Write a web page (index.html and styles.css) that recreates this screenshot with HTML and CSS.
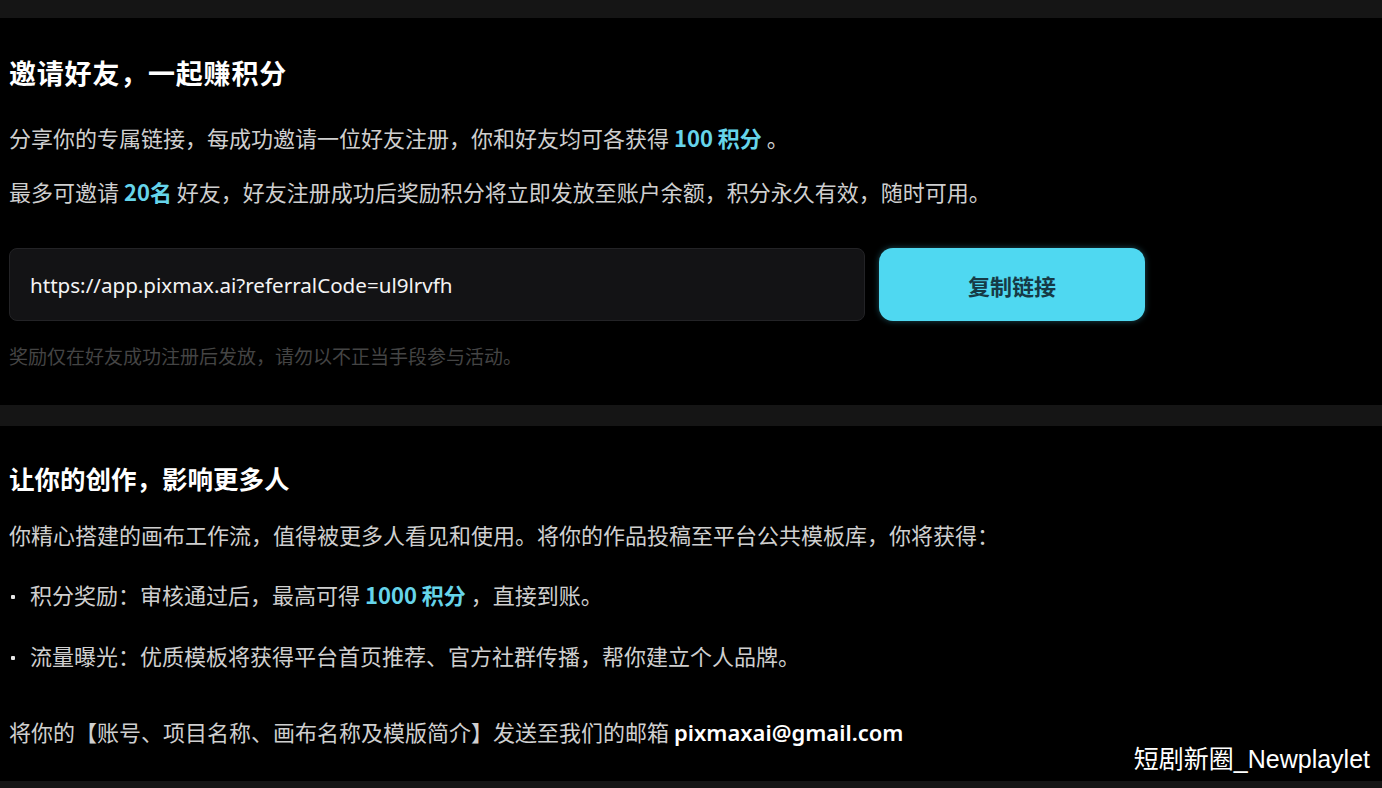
FILE: index.html
```html
<!DOCTYPE html>
<html lang="zh-CN">
<head>
    <meta charset="UTF-8">
    <meta name="viewport" content="width=device-width, initial-scale=1.0">
    <title>邀请好友</title>
    <link rel="stylesheet" href="styles.css">
</head>
<body>

    <div class="band band-top"></div>

    <!-- 邀请好友 -->
    <section class="panel invite">
        <h2>邀请好友，一起赚积分</h2>
        <p class="desc">分享你的专属链接，每成功邀请一位好友注册，你和好友均可各获得 <span class="hl">100 积分</span> 。</p>
        <p class="desc second">最多可邀请 <span class="hl">20名</span> 好友，好友注册成功后奖励积分将立即发放至账户余额，积分永久有效，随时可用。</p>
        <div class="link-row">
            <div class="link-box">https://app.pixmax.ai?referralCode=ul9lrvfh</div>
            <button class="copy-btn">复制链接</button>
        </div>
        <p class="hint">奖励仅在好友成功注册后发放，请勿以不正当手段参与活动。</p>
    </section>

    <div class="band band-mid"></div>

    <!-- 模板投稿 -->
    <section class="panel submit">
        <h2>让你的创作，影响更多人</h2>
        <p class="desc">你精心搭建的画布工作流，值得被更多人看见和使用。将你的作品投稿至平台公共模板库，你将获得：</p>
        <ul class="perks">
            <li>积分奖励：审核通过后，最高可得 <span class="hl">1000 积分</span> ，直接到账。</li>
            <li>流量曝光：优质模板将获得平台首页推荐、官方社群传播，帮你建立个人品牌。</li>
        </ul>
        <p class="desc mail">将你的【账号、项目名称、画布名称及模版简介】发送至我们的邮箱 <strong>pixmaxai@gmail.com</strong></p>
    </section>

    <div class="band band-bottom"></div>

    <div class="watermark">短剧新圈_Newplaylet</div>

</body>
</html>
```

FILE: styles.css
```css
body {
    font-family: "Noto Sans CJK SC", "Noto Sans", sans-serif;
    background-color: #000;
    color: #cfcfcf;
    margin: 0;
    padding: 0;
    height: 788px;
    overflow: hidden;
    position: relative;
}
.band {
    background-color: #151515;
}
.band-top {
    height: 18px;
}
.band-mid {
    height: 21px;
}
.band-bottom {
    height: 12px;
}
.panel {
    padding: 0 9px;
}
.panel h2 {
    margin: 0;
    font-size: 27px;
    line-height: 32px;
    font-weight: bold;
    color: #fff;
}
.invite {
    padding-top: 39px;
    padding-bottom: 38px;
}
.invite h2 {
    letter-spacing: 0.8px;
}
.submit {
    padding-top: 36px;
    padding-bottom: 35px;
}
.submit h2 {
    font-size: 25.5px;
}
.desc {
    margin: 34px 0 0;
    font-size: 22px;
    line-height: 28px;
}
.desc.second {
    margin-top: 26px;
}
.submit .desc {
    margin-top: 26px;
}
.hl {
    color: #66d4ea;
    font-weight: bold;
}
.link-row {
    display: flex;
    gap: 14px;
    margin-top: 43px;
    height: 73px;
}
.link-box {
    width: 856px;
    box-sizing: border-box;
    background-color: #131315;
    border: 1px solid #232326;
    border-radius: 8px;
    padding: 0 20px;
    display: flex;
    align-items: center;
    font-family: "Noto Sans", sans-serif;
    font-size: 20.6px;
    color: #f4f4f4;
}
.copy-btn {
    width: 266px;
    border: none;
    border-radius: 14px;
    background-color: #4fd8f1;
    color: #163a46;
    font-family: "Noto Sans CJK SC", sans-serif;
    font-size: 22px;
    font-weight: bold;
    box-shadow: 0 0 6px rgba(79, 216, 241, 0.35);
    cursor: pointer;
}
.hint {
    margin: 24px 0 0;
    font-size: 19px;
    line-height: 22px;
    color: #444;
}
.perks {
    list-style: none;
    margin: 32px 0 0;
    padding: 0;
}
.perks li {
    font-size: 22px;
    line-height: 28px;
    padding-left: 21px;
    position: relative;
}
.perks li + li {
    margin-top: 33px;
}
.perks li::before {
    content: "";
    position: absolute;
    left: 2px;
    top: 15px;
    width: 4px;
    height: 4px;
    border-radius: 1px;
    background-color: #e6e6e6;
}
.desc.mail {
    margin-top: 48px;
}
.mail strong {
    color: #fff;
    font-family: "Noto Sans", sans-serif;
    font-weight: 600;
}
.watermark {
    position: absolute;
    right: 12px;
    bottom: 13px;
    font-family: "Liberation Sans", "Noto Sans CJK SC", sans-serif;
    font-size: 25px;
    color: #fff;
}
```
